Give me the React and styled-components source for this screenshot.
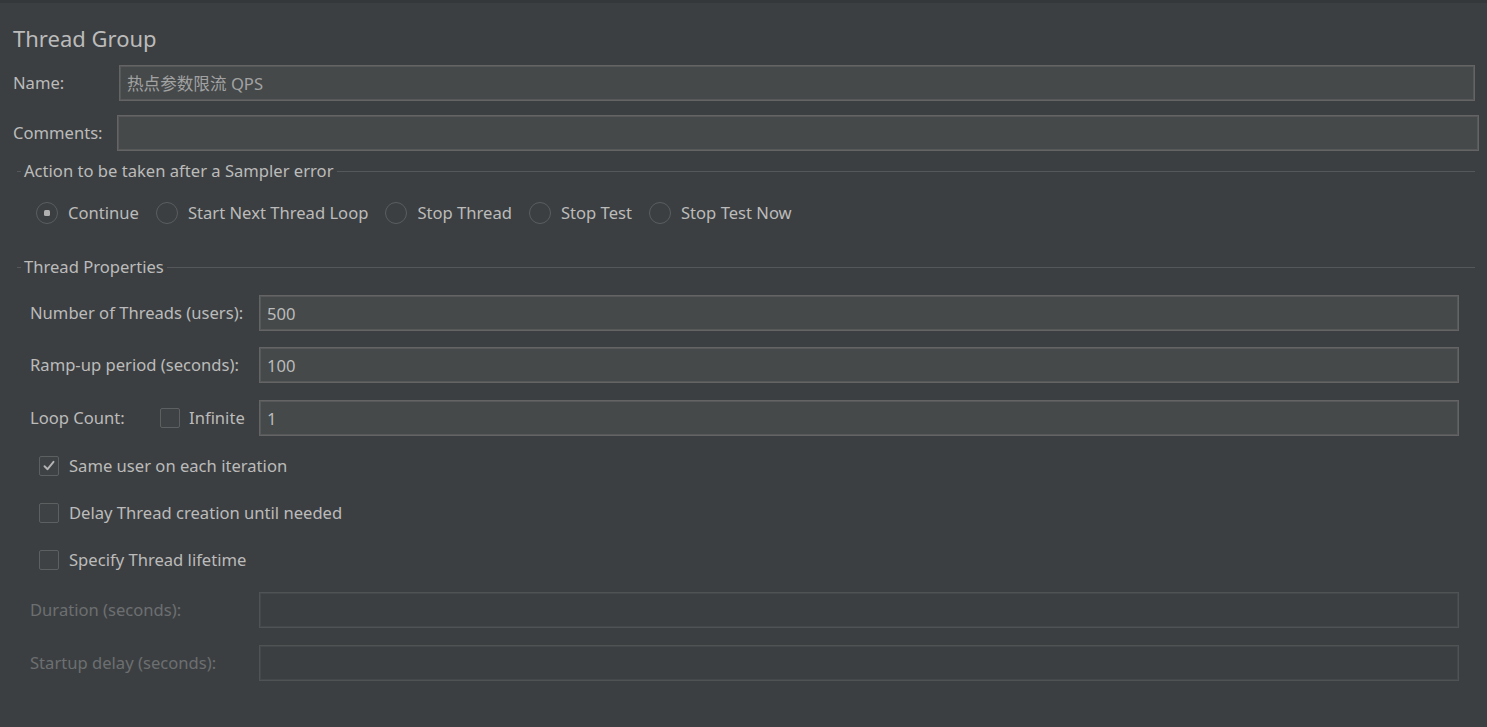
import React from "react"
import styled, { createGlobalStyle } from "styled-components"

const GlobalStyle = createGlobalStyle`
  html, body {
    margin: 0;
    padding: 0;
    background: #3c3f41;
  }
  body {
    font-family: "Noto Sans", "Noto Sans CJK SC", sans-serif;
    color: #bbbbbb;
  }
`

const App = () => {
  return (
    <Page>
      <GlobalStyle />
      <TopStrip />
      <Content>
        <Title>Thread Group</Title>

        <Row top={12} right={12}>
          <Label width={106}>Name:</Label>
          <TextField value="热点参数限流 QPS" muted />
        </Row>
        <Row top={14} right={8}>
          <Label width={104}>Comments:</Label>
          <TextField />
        </Row>

        <SectionHeader top={10}>
          <Dash />
          <Legend>Action to be taken after a Sampler error</Legend>
          <Rule />
        </SectionHeader>

        <RadioRow>
          <Radio label="Continue" checked />
          <Radio label="Start Next Thread Loop" />
          <Radio label="Stop Thread" />
          <Radio label="Stop Test" />
          <Radio label="Stop Test Now" />
        </RadioRow>

        <SectionHeader top={33}>
          <Dash />
          <Legend>Thread Properties</Legend>
          <Rule />
        </SectionHeader>

        <Props>
          <Row top={18} right={28} indent={17}>
            <Label width={229}>Number of Threads (users):</Label>
            <TextField value="500" />
          </Row>
          <Row top={16} right={28} indent={17}>
            <Label width={229}>Ramp-up period (seconds):</Label>
            <TextField value="100" />
          </Row>
          <Row top={17} right={28} indent={17}>
            <LabelCell>
              <Label width={130}>Loop Count:</Label>
              <Check label="Infinite" gap={9} />
            </LabelCell>
            <TextField value="1" />
          </Row>

          <CheckRow top={20}>
            <Check label="Same user on each iteration" checked />
          </CheckRow>
          <CheckRow top={27}>
            <Check label="Delay Thread creation until needed" />
          </CheckRow>
          <CheckRow top={27}>
            <Check label="Specify Thread lifetime" />
          </CheckRow>

          <Row top={22} right={28} indent={17}>
            <Label width={229} disabled>Duration (seconds):</Label>
            <TextField disabled />
          </Row>
          <Row top={17} right={28} indent={17}>
            <Label width={229} disabled>Startup delay (seconds):</Label>
            <TextField disabled />
          </Row>
        </Props>
      </Content>
    </Page>
  )
}

const Radio = ({ label, checked }) => (
  <RadioItem>
    <RadioCircle>{checked && <RadioDot />}</RadioCircle>
    <span>{label}</span>
  </RadioItem>
)

const Check = ({ label, checked, gap }) => (
  <CheckItem gap={gap}>
    <CheckBox>
      {checked && (
        <svg width="14" height="14" viewBox="0 0 14 14">
          <path
            d="M2.5 7.2 L5.6 10.2 L11.5 2.8"
            fill="none"
            stroke="#b4b4b4"
            strokeWidth="1.9"
            strokeLinecap="round"
            strokeLinejoin="round"
          />
        </svg>
      )}
    </CheckBox>
    <span>{label}</span>
  </CheckItem>
)

const TextField = ({ value, muted, disabled }) => (
  <Field muted={muted} disabled={disabled}>
    {value}
  </Field>
)

export default App

const Page = styled.div`
  width: 1487px;
  height: 727px;
  background: #3c3f41;
  overflow: hidden;
`

const TopStrip = styled.div`
  height: 3px;
  background: #35383a;
`

const Content = styled.div`
  display: flex;
  flex-direction: column;
  padding-left: 13px;
`

const Title = styled.div`
  margin-top: 21px;
  font-size: 22px;
  line-height: 29px;
  color: #bbbbbb;
`

const Row = styled.div`
  display: flex;
  align-items: center;
  margin-top: ${(p) => p.top}px;
  margin-right: ${(p) => p.right}px;
  padding-left: ${(p) => p.indent || 0}px;
`

const LabelCell = styled.div`
  flex: none;
  width: 229px;
  display: flex;
  align-items: center;
`

const Label = styled.div`
  flex: none;
  width: ${(p) => p.width}px;
  font-size: 16.6px;
  line-height: 20px;
  color: ${(p) => (p.disabled ? "#6c6f71" : "#bbbbbb")};
  white-space: nowrap;
`

const Field = styled.div`
  flex: 1;
  box-sizing: border-box;
  height: 36px;
  padding: 0 7px;
  display: flex;
  align-items: center;
  font-size: 16.6px;
  color: ${(p) => (p.muted ? "#a2a2a2" : "#bbbbbb")};
  background: ${(p) => (p.disabled ? "#3c3f41" : "#45494a")};
  border: 1px solid ${(p) => (p.disabled ? "#505354" : "#646464")};
  box-shadow: inset 0 0 0 1px ${(p) => (p.disabled ? "#45484a" : "#565859")};
`

const SectionHeader = styled.div`
  display: flex;
  align-items: center;
  height: 20px;
  margin-top: ${(p) => p.top}px;
  margin-right: 12px;
  padding-left: 4px;
`

const Dash = styled.div`
  width: 4px;
  height: 1px;
  background: #55585a;
  margin-right: 3px;
`

const Legend = styled.div`
  font-size: 16.6px;
  line-height: 20px;
  color: #bbbbbb;
  white-space: nowrap;
`

const Rule = styled.div`
  flex: 1;
  height: 1px;
  background: #55585a;
  margin-left: 3px;
`

const RadioRow = styled.div`
  display: flex;
  align-items: center;
  gap: 17px;
  margin-top: 21px;
  padding-left: 23px;
  height: 22px;
`

const RadioItem = styled.div`
  display: flex;
  align-items: center;
  gap: 10px;
  font-size: 16.6px;
  line-height: 20px;
  color: #bbbbbb;
  white-space: nowrap;
`

const RadioCircle = styled.div`
  box-sizing: border-box;
  width: 22px;
  height: 22px;
  border-radius: 50%;
  border: 1.5px solid #5b5e60;
  background: #3c3f41;
  display: flex;
  align-items: center;
  justify-content: center;
`

const RadioDot = styled.div`
  width: 6px;
  height: 6px;
  border-radius: 1.5px;
  background: #b0b0b0;
`

const Props = styled.div`
  display: flex;
  flex-direction: column;
`

const CheckRow = styled.div`
  display: flex;
  align-items: center;
  height: 20px;
  margin-top: ${(p) => p.top}px;
  padding-left: 26px;
`

const CheckItem = styled.div`
  display: flex;
  align-items: center;
  gap: ${(p) => p.gap || 10}px;
  font-size: 16.6px;
  line-height: 20px;
  color: #bbbbbb;
  white-space: nowrap;
`

const CheckBox = styled.div`
  box-sizing: border-box;
  width: 20px;
  height: 20px;
  border: 1.5px solid #5d6061;
  border-radius: 2px;
  background: #3e4244;
  display: flex;
  align-items: center;
  justify-content: center;
`
